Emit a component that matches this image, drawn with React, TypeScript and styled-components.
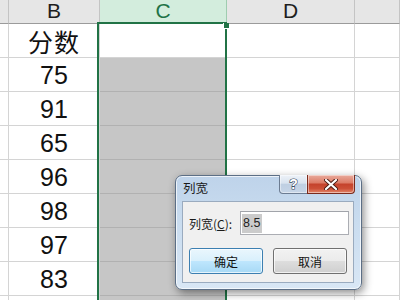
import React from "react";
import styled, { createGlobalStyle } from "styled-components";

const Global = createGlobalStyle`
  html, body { margin: 0; padding: 0; background: #fff; }
  body { width: 400px; height: 300px; overflow: hidden; }
`;

const Page = styled.div`
  position: relative;
  width: 400px;
  height: 300px;
  overflow: hidden;
  background: #fff;
`;

const Sheet = styled.div`
  display: grid;
  grid-template-columns: 9px 91px 127px 128px 1fr;
  grid-template-rows: 24px repeat(9, 34px);
`;

const HeadCell = styled.div<{ $sel?: boolean }>`
  box-sizing: border-box;
  border-right: 1px solid ${(p) => (p.$sel ? "#9fcdb0" : "#c4c4c4")};
  border-bottom: 1px solid #9b9b9b;
  background: ${(p) => (p.$sel ? "#d3eddd" : "#e6e6e6")};
  color: ${(p) => (p.$sel ? "#217346" : "#1e1e1e")};
  font-family: "Liberation Sans", Arial, sans-serif;
  font-size: 21px;
  line-height: 19px;
  display: flex;
  align-items: center;
  justify-content: center;
  padding-bottom: 3px;
`;

const Cell = styled.div<{ $shade?: boolean }>`
  box-sizing: border-box;
  border-right: 1px solid ${(p) => (p.$shade ? "#b1b1b1" : "#d4d4d4")};
  border-bottom: 1px solid ${(p) => (p.$shade ? "#b1b1b1" : "#d4d4d4")};
  background: ${(p) => (p.$shade ? "#c6c6c6" : "#fff")};
  color: #111;
  font-family: "Liberation Sans", "Noto Sans CJK SC", sans-serif;
  font-size: 25px;
  line-height: 30px;
  display: flex;
  align-items: center;
  justify-content: center;
`;

const CjkText = styled.span`
  font-family: "Noto Sans CJK SC", sans-serif;
  font-size: 25px;
  line-height: 30px;
  letter-spacing: 1px;
`;

const Selection = styled.div`
  position: absolute;
  left: 97px;
  top: 22px;
  width: 130px;
  height: 300px;
  box-sizing: border-box;
  border: 2px solid #217346;
  border-bottom: none;
  pointer-events: none;
`;

const FillHandle = styled.div`
  position: absolute;
  right: -4px;
  top: -1px;
  width: 5px;
  height: 5px;
  background: #217346;
  border-left: 1px solid #fff;
  border-bottom: 1px solid #fff;
`;

const Dialog = styled.div`
  position: absolute;
  left: 175px;
  top: 175px;
  width: 187px;
  height: 115px;
  box-sizing: border-box;
  border: 1px solid #5c6f86;
  border-radius: 7px;
  background: linear-gradient(180deg, #bed3ea 0%, #c9dcef 40%, #d9e7f5 100%);
  box-shadow: 2px 3px 9px rgba(0, 0, 0, 0.45), inset 0 0 0 1px rgba(255, 255, 255, 0.7);
  display: flex;
  flex-direction: column;
  font-family: "Noto Sans CJK SC", "Liberation Sans", sans-serif;
  font-size: 12px;
  color: #111;
`;

const TitleBar = styled.div`
  height: 25px;
  display: flex;
  align-items: flex-start;
  padding: 0 6px 0 7px;
`;

const Title = styled.div`
  flex: 1;
  padding-top: 4px;
  font-size: 12.5px;
  line-height: 16px;
  color: #1a1a1a;
`;

const CaptionButtons = styled.div`
  display: flex;
  margin-top: -1px;
`;

const CapButton = styled.div<{ $close?: boolean }>`
  box-sizing: border-box;
  width: ${(p) => (p.$close ? "48px" : "29px")};
  height: 19px;
  border: 1px solid ${(p) => (p.$close ? "#7a2a1c" : "#6c7c92")};
  border-top: none;
  border-radius: ${(p) => (p.$close ? "0 0 4px 0" : "0 0 0 4px")};
  background: ${(p) =>
    p.$close
      ? "linear-gradient(180deg, #e9ab9d 0%, #dd7d68 42%, #c5432c 52%, #cc4f36 75%, #e2866b 100%)"
      : "linear-gradient(180deg, #edf2f8 0%, #d9e3ef 45%, #bfcfe2 52%, #c6d5e7 100%)"};
  box-shadow: inset 0 0 0 1px rgba(255, 255, 255, 0.45);
  display: flex;
  align-items: center;
  justify-content: center;
  margin-left: ${(p) => (p.$close ? "-1px" : "0")};
`;

const HelpGlyph = styled.span`
  font-family: "Liberation Sans", sans-serif;
  font-weight: bold;
  font-size: 14px;
  line-height: 14px;
  color: #fff;
  -webkit-text-stroke: 1.2px #3d4b5e;
  paint-order: stroke fill;
`;

const Body = styled.div`
  flex: 1;
  margin: 0 7px 6px 6px;
  box-sizing: border-box;
  border: 1px solid #9aabbf;
  background: #f0f0f0;
  display: flex;
  flex-direction: column;
  padding: 9px 4px 0 6px;
`;

const Row = styled.div`
  display: flex;
  align-items: center;
  justify-content: space-between;
`;

const Label = styled.label`
  font-size: 12px;
  color: #1a1a1a;
  u {
    text-decoration: underline;
    text-underline-offset: 1px;
  }
`;

const Input = styled.div`
  box-sizing: border-box;
  width: 109px;
  height: 24px;
  border: 1px solid #abadb3;
  border-top-color: #a1a4aa;
  background: #fff;
  display: flex;
  align-items: center;
  padding-left: 1px;
`;

const Selected = styled.span`
  background: #cbcbcb;
  font-family: "Liberation Sans", sans-serif;
  font-size: 12.5px;
  line-height: 19px;
  padding: 0 2px 0 1px;
  color: #222;
`;

const Buttons = styled.div`
  display: flex;
  justify-content: space-between;
  margin-top: 13px;
  padding-right: 2px;
`;

const Button = styled.div<{ $primary?: boolean }>`
  box-sizing: border-box;
  width: 74px;
  height: 26px;
  border-radius: 3px;
  border: 1px solid ${(p) => (p.$primary ? "#3c7fb1" : "#707070")};
  background: ${(p) =>
    p.$primary
      ? "linear-gradient(180deg, #eaf6fd 0%, #d9f0fc 48%, #bee6fd 52%, #a7d9f5 100%)"
      : "linear-gradient(180deg, #f2f2f2 0%, #ebebeb 48%, #dddddd 52%, #cfcfcf 100%)"};
  box-shadow: inset 0 0 0 1px rgba(255, 255, 255, 0.7);
  display: flex;
  align-items: center;
  justify-content: center;
  font-size: 12px;
  color: #111;
`;

const headers = ["", "B", "C", "D", ""];
const values = ["分数", "75", "91", "65", "96", "98", "97", "83", ""];

export default function App() {
  return (
    <Page>
      <Global />
      <Sheet>
        {headers.map((h, i) => (
          <HeadCell key={"h" + i} $sel={i === 2}>
            {h}
          </HeadCell>
        ))}
        {values.map((v, r) => (
          <React.Fragment key={"r" + r}>
            <Cell />
            <Cell>{r === 0 ? <CjkText>{v}</CjkText> : v}</Cell>
            <Cell $shade={r > 0} />
            <Cell />
            <Cell />
          </React.Fragment>
        ))}
      </Sheet>
      <Selection>
        <FillHandle />
      </Selection>
      <Dialog>
        <TitleBar>
          <Title>列宽</Title>
          <CaptionButtons>
            <CapButton>
              <HelpGlyph>?</HelpGlyph>
            </CapButton>
            <CapButton $close>
              <svg width="14" height="11" viewBox="0 0 14 11">
                <path
                  d="M2 1 L12 10 M12 1 L2 10"
                  stroke="#4a1c14"
                  strokeWidth="4"
                  strokeLinecap="round"
                />
                <path
                  d="M2 1 L12 10 M12 1 L2 10"
                  stroke="#fff"
                  strokeWidth="2.2"
                  strokeLinecap="round"
                />
              </svg>
            </CapButton>
          </CaptionButtons>
        </TitleBar>
        <Body>
          <Row>
            <Label>
              列宽(<u>C</u>):
            </Label>
            <Input>
              <Selected>8.5</Selected>
            </Input>
          </Row>
          <Buttons>
            <Button $primary>确定</Button>
            <Button>取消</Button>
          </Buttons>
        </Body>
      </Dialog>
    </Page>
  );
}
